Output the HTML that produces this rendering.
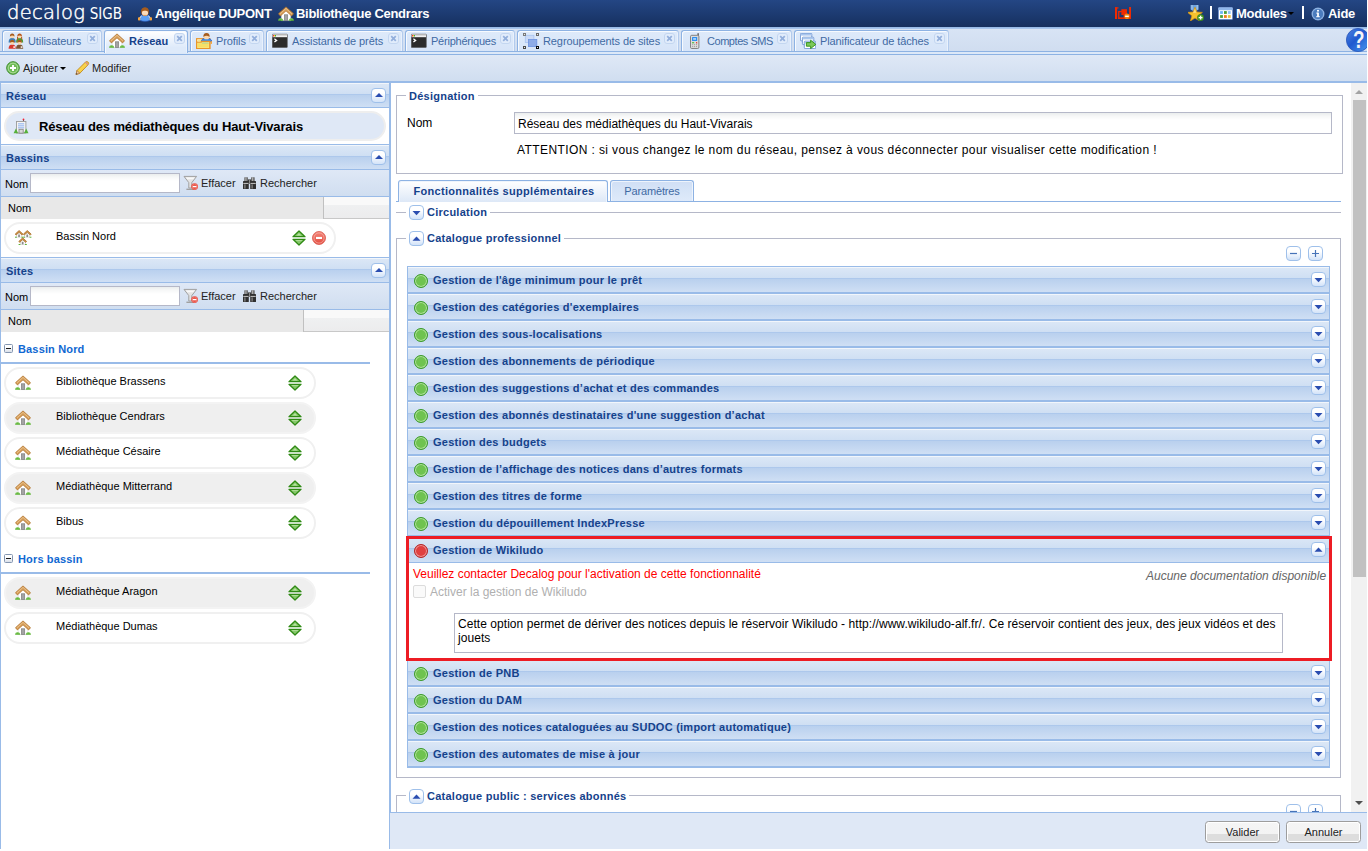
<!DOCTYPE html>
<html lang="fr"><head><meta charset="utf-8"><title>Decalog SIGB</title>
<style>
*{box-sizing:border-box;margin:0;padding:0}
html,body{width:1368px;height:851px;overflow:hidden;background:#fff;font-family:"Liberation Sans",sans-serif;font-size:11px;color:#000}
body{position:relative}
svg{display:block}
#app{position:absolute;left:0;top:0;width:1367px;height:849px;background:#dfe8f6;overflow:hidden}
#hdr{position:absolute;left:0;top:0;width:1367px;height:27px;background:linear-gradient(#244684,#1c3a70 55%,#17305f)}
#hdr .logo{position:absolute;left:7px;top:0;color:#fff;white-space:nowrap}
.l1{font-family:"DejaVu Sans Light","DejaVu Sans","Liberation Sans",sans-serif;font-weight:200;font-size:19.5px;letter-spacing:0.3px;line-height:26px;-webkit-text-stroke:0.45px #fff}
.l2{font-family:"DejaVu Sans Condensed","Liberation Sans",sans-serif;font-size:15px;margin-left:4.6px;line-height:26px}
.hi{position:absolute}
.hu{position:absolute;top:6px;color:#fff;font-weight:bold;font-size:13px;line-height:16px;white-space:nowrap;letter-spacing:-0.3px}
.sep{position:absolute;top:6px;width:2px;height:13px;background:#fff}
.darr{position:absolute;width:0;height:0;border:3px solid transparent;border-top:3.5px solid #000;border-bottom:0}
.darr.k{border-top-color:#000}
#tabs{position:absolute;left:0;top:27px;width:1367px;height:28px;background:linear-gradient(#d8e4f5,#cfdcef);border-top:1px solid #99bbe8}
#tabs:before{content:"";position:absolute;left:0;top:0;width:100%;height:1px;background:#a8c5ec}
.tline{position:absolute;left:0;top:23px;width:1367px;height:4px;background:#dce8f8;border-top:1px solid #8db2e3;border-bottom:1px solid #8db2e3}
.tab{position:absolute;top:2px;height:22px;border:1px solid #8db2e3;border-right-color:#b3cbed;border-bottom:0;border-radius:3px 3px 0 0;background:linear-gradient(#deeafa,#d6e4f8);box-shadow:inset 1px 1px 0 0 #f7fafe,inset -1px 0 0 0 #e9f1fc}
.tab.act{background:linear-gradient(#ffffff,#deeafa 75%);height:23px;z-index:2;border-right-color:#8db2e3}
.tab .ti{position:absolute;left:5px;top:2px}
.tab .tx{position:absolute;left:25px;top:3px;line-height:14px;color:#416aa3;white-space:nowrap;letter-spacing:-0.1px}
.tab.act .tx{color:#15428b;font-weight:bold;letter-spacing:0;left:24px}
.tab.act .ti{left:4px}
.tab.act .cl{right:2px}
.tab .cl{position:absolute;right:3px;top:2px}
.help{position:absolute;left:1346px;top:0}
#tbar{position:absolute;left:0;top:55px;width:1367px;height:28px;background:linear-gradient(#dfe8f6,#d0def0);border-bottom:2px solid #99bbe8}
.bt{position:absolute;top:6px;line-height:14px;color:#222;white-space:nowrap}
#left{position:absolute;left:0;top:83px;width:391px;height:766px;background:linear-gradient(to right,#99bbe8 1px,#fff 1px);border-right:2px solid #99bbe8}
#left>*{margin-top:-83px}
.ph{position:absolute;left:1px;width:388px;height:26px;border-top:1px solid #99bbe8;border-bottom:1px solid #99bbe8;background:linear-gradient(#f2f6fb 0,#f2f6fb 1px,#dbe7f6 1px,#cfdff3 11px,#adc8ec 11px,#adc8ec 12px,#b9d0ee 12px,#cfdff4 100%)}
.ph span{position:absolute;left:5px;top:6px;font-weight:bold;color:#15428b;line-height:14px;letter-spacing:0.2px}
.pt-tg{position:absolute;left:370px;top:5px;width:15px;height:15px;border:1px solid #9fc0ea;border-radius:4px;background:linear-gradient(#fff 30%,#d3e3f8)}
.pt-tg:after{content:"";position:absolute;left:2.5px;top:4px;border:4px solid transparent;border-bottom:4.5px solid #2a4db0;border-top:0}
.bigpill{position:absolute;left:4px;width:382px;height:30px;border-radius:15px;background:#dfe8f6;border:2px solid #eeeeee}
.bigpill span{position:absolute;left:33px;top:6px;font-size:13px;font-weight:bold;line-height:16px;white-space:nowrap;letter-spacing:-0.13px}
.ltb{position:absolute;left:1px;width:388px;height:27px;background:linear-gradient(#dfe8f6,#d0def0);border-bottom:1px solid #99bbe8}
.ltb .lb{position:absolute;left:4px;top:7px;line-height:14px}
.ltb .inp{position:absolute;left:29px;top:3px;width:150px;height:20px;background:linear-gradient(#eaeded 0,#f6f7f7 3px,#fff 7px);border:1px solid #b5b8c8}
.ltb .fi{position:absolute}
.ltb .tt{position:absolute;top:6px;line-height:14px;color:#222}
.gh{position:absolute;left:1px;width:388px;height:22px;background:linear-gradient(#f9f9f9 0,#f9f9f9 8px,#eff0f1 8px,#ececed 100%);border-bottom:1px solid #c8c8c8}
.ghc{height:22px;background:#e8e8e8;border-right:1px solid #c0c0c0;padding:5px 0 0 7px;line-height:13px}
.pill{position:absolute;left:4px;height:32px;border:2px solid #f0f0f0;border-radius:16px;background:#fff}
.pill.alt{background:#efefef;border-color:#f3f3f3}
.pill .ic{position:absolute;left:9px;top:6px}
.pill .pt{position:absolute;left:50px;top:5px;line-height:14px;white-space:nowrap}
.pill .ud{position:absolute;top:6px}
.grp{position:absolute;left:1px;width:369px;height:23px;border-bottom:2px solid #99bbe8;padding:1px 0 0 17px;color:#1068d2;font-weight:bold;line-height:14px;letter-spacing:0.15px}
.gm{position:absolute;left:3px;top:3px;width:9px;height:9px;border:1px solid #8496b0;background:linear-gradient(#fff 30%,#d9dfe9);border-radius:1.5px}
.gm:after{content:"";position:absolute;left:1px;top:2.5px;width:5px;height:1.6px;background:#1a1a1a}
#right{position:absolute;left:391px;top:83px;width:976px;height:766px;background:#fff;overflow:hidden}
#right>*{margin-left:-391px;margin-top:-83px}
.fs{position:absolute;border:1px solid #b5b8c8}
.fs.nb{border-bottom:0}
.lg{position:absolute;background:#fff;padding:0 3px;font-weight:bold;color:#15428b;line-height:15px;white-space:nowrap;letter-spacing:0.25px}
.ftg{display:inline-block;vertical-align:top;margin-right:3px}
.fl{position:absolute;font-size:12px;line-height:15px}
.tin{position:absolute;border:1px solid #b5b8c8;background:linear-gradient(#eaeded 0,#f6f7f7 3px,#fff 7px);font-size:12px;line-height:18px;padding:2px 0 0 3px;white-space:nowrap}
.att{position:absolute;font-size:12px;line-height:15px;white-space:nowrap;letter-spacing:0.4px}
.t2line{position:absolute;left:396px;top:201px;width:945px;height:1px;background:#8db2e3}
.t2{position:absolute;top:180px;height:21px;border:1px solid #8db2e3;border-bottom:0;border-radius:3px 3px 0 0;background:linear-gradient(#d0dff5,#deeafa);box-shadow:inset 1px 1px 0 0 #eef4fc,inset -1px 0 0 0 #eef4fc;text-align:center}
.t2 span{line-height:20px;color:#416aa3;letter-spacing:-0.15px}
.t2.act{height:22px;background:linear-gradient(#fff,#dde8f7)}
.t2.act span{font-weight:bold;color:#15428b;letter-spacing:0.3px;padding-left:2px}
.hl{position:absolute;height:1px;background:#b5b8c8}
.ah{position:absolute;left:407px;width:923px;height:27px;border:1px solid #99bbe8;border-top:0;border-bottom-width:2px;background:linear-gradient(#f2f6fb 0,#f2f6fb 1px,#dbe7f6 1px,#cfdff3 11px,#adc8ec 11px,#adc8ec 12px,#b9d0ee 12px,#cfdff4 100%)}
.ah.first{box-shadow:0 -1px 0 0 #99bbe8}
.ah.open{height:26px;border-bottom-width:1px}
.ah .dot{position:absolute;left:6px;top:7px;width:14px;height:14px;border-radius:50%;background:#6fc350;border:1.3px solid #3c9a2c;box-shadow:inset 0 0 0 1px #b4e39e}
.ah .dot.red{background:#e04040;border-color:#b32626;box-shadow:inset 0 0 0 1px #f09a9a}
.ah .at{position:absolute;left:25px;top:6px;line-height:14px;font-weight:bold;color:#15428b;white-space:nowrap;letter-spacing:0.25px}
.ah .tg{position:absolute;left:903px;top:5px}
.redbox{position:absolute;left:406px;top:536px;width:926px;height:125px;border:3px solid #ed1c24;pointer-events:none;z-index:3}
.wbody{position:absolute;left:408px;top:563px;width:921px;height:96px;background:#fff}
.rt{position:absolute;color:#ff0000;font-size:12px;line-height:14px;white-space:nowrap}
.nodoc{position:absolute;font-style:italic;color:#666;font-size:12px;line-height:14px;white-space:nowrap}
.cb{position:absolute;width:13px;height:13px;border:1px solid #dcdcdc;border-radius:2px;background:#fafafa}
.cbl{position:absolute;color:#b0b0b0;font-size:12px;line-height:15px;white-space:nowrap}
.info{position:absolute;border:1px solid #b5b8c8;font-size:12px;line-height:14px;padding:3px 4px 0 3px;letter-spacing:0.05px}
#sb{position:absolute;left:1351px;top:83px;width:16px;height:729px;background:#f1f1f1}
#sb .su,#sb .sd{position:absolute;left:4px;border:4px solid transparent}
#sb .su{top:7px;border-bottom:4.5px solid #a3a3a3;border-top:0}
#sb .sd{top:718px;border-top:4.5px solid #505050;border-bottom:0}
#sb .th{position:absolute;left:2px;top:17px;width:13px;height:477px;background:#c1c1c1}
#foot{position:absolute;left:390px;top:812px;width:977px;height:37px;background:#dfe8f6;border-top:1px solid #99bbe8}
.btn{position:absolute;top:8px;width:75px;height:22px;border:1px solid #9d9d9d;border-radius:3.5px;background:linear-gradient(#f5f5f5 0,#f3f3f3 12px,#dddddd 12px,#dddddd 100%);text-align:center;line-height:20px;color:#222;box-shadow:inset 0 0 0 1px #fff}

</style></head>
<body>
<div id="app">
<div id="hdr"><span class="logo"><span class="l1">decalog</span><span class="l2">SIGB</span></span><svg class="hi" style="left:137px;top:6px" width="16" height="16" viewBox="0 0 16 16"><path d="M4.3 9.3 H11.7 L14 12.5 Q13.5 15.3 8 15.3 Q2.5 15.3 2 12.5 Z" fill="#5b9ff5" stroke="#2f62c4" stroke-width=".7"/><path d="M4.5 9.6 L2.6 12.3 M11.5 9.6 L13.4 12.3" stroke="#e8f0ff" stroke-width=".9"/><rect x="1" y="11.3" width="2.3" height="3.2" rx=".8" fill="#f6a33b"/><rect x="12.7" y="11.3" width="2.3" height="3.2" rx=".8" fill="#f6a33b"/><ellipse cx="8" cy="5.6" rx="3.9" ry="4.2" fill="#a55c1e"/><ellipse cx="8" cy="6.9" rx="3.1" ry="2.6" fill="#fbdcbc"/><path d="M4.4 5.6 Q8 3.4 11.6 5.6 Q11 1.6 8 1.5 Q5 1.6 4.4 5.6Z" fill="#a55c1e"/><rect x="6.2" y="8.9" width="3.6" height="1.1" fill="#d79a62"/></svg><span class="hu" style="left:155px">Angélique DUPONT</span><svg class="hi" style="left:278px;top:6px" width="16" height="16" viewBox="0 0 16 16"><path d="M8 3.4 L3.3 7.8 V14.6 H12.7 V7.8 Z" fill="#ffffff" stroke="#d4d4d4" stroke-width=".5"/><rect x="6.4" y="8.8" width="3.3" height="5.8" fill="#a3a3a3"/><rect x="6.4" y="8.8" width="3.3" height="5.8" fill="none" stroke="#7d7d7d" stroke-width=".7"/><path d="M0.5 7.7 L8 0.9 L15.5 7.7 L13.6 9.9 L8 4.8 L2.4 9.9 Z" fill="#d9a05a" stroke="#b0712a" stroke-width=".8" stroke-linejoin="round"/><path d="M1.9 7.9 L8 2.4 L14.1 7.9" fill="none" stroke="#eac795" stroke-width=".8"/><path d="M0 14.8 Q0.2 12.1 2.8 12.3 Q5.2 12.5 5.4 14.8 Z" fill="#5cb335"/><path d="M10.6 14.8 Q10.8 12.5 13.2 12.3 Q15.8 12.1 16 14.8 Z" fill="#5cb335"/><path d="M0.6 13.2 Q2.8 12.2 4.8 13.4" fill="none" stroke="#9bd87c" stroke-width=".6"/><path d="M11.2 13.4 Q13.2 12.2 15.4 13.2" fill="none" stroke="#9bd87c" stroke-width=".6"/></svg><span class="hu" style="left:296px">Bibliothèque Cendrars</span><svg class="hi" style="left:1115px;top:7px" width="16.4" height="12" viewBox="0 0 17 12" preserveAspectRatio="none"><rect x="0" y="0.3" width="2.2" height="11.7" fill="#f02a00"/><rect x="0" y="0.3" width="3.6" height="1.2" fill="#f02a00"/><rect x="14.6" y="0" width="2.2" height="12" fill="#f02a00"/><rect x="3.2" y="10.6" width="13" height="1.4" fill="#f02a00"/><rect x="3.9" y="4.6" width="5.6" height="6.6" fill="none" stroke="#f02a00" stroke-width="1.3"/><rect x="6.6" y="2.2" width="5.8" height="5.8" fill="#f02a00"/><circle cx="12.4" cy="9.3" r="2.8" fill="#f0860f"/><rect x="10.5" y="8.6" width="3.8" height="1.4" fill="#fff"/></svg><svg class="hi" style="left:1188px;top:5px" width="16" height="16" viewBox="0 0 16 16"><path d="M2.6 0 H10.6 V4.5 L6.6 7 L2.6 4.5Z" fill="#6fa4dc"/><path d="M4 0 V4.6 M9.2 0 V4.6" stroke="#b7d3f0" stroke-width=".9"/><path d="M7 2.2 L8.9 7 L14.4 7.4 L10.2 10.8 L11.6 16 L7 13.1 L2.4 16 L3.8 10.8 L-0.4 7.4 L5.1 7Z" fill="#f6c22e" stroke="#d9920f" stroke-width=".7" stroke-linejoin="round"/><path d="M7 4 L8.2 7.8 L5 7.8Z" fill="#fbe08a"/><circle cx="12.6" cy="12.6" r="3.2" fill="#4fa22e" stroke="#357a1a" stroke-width=".7"/><path d="M10.7 12.6 H14.5 M12.6 10.7 V14.5" stroke="#fff" stroke-width="1.3"/></svg><span class="sep" style="left:1210px"></span><svg class="hi" style="left:1218px;top:7px" width="15" height="13" viewBox="0 0 15 13"><rect x="0.4" y="0.4" width="14.2" height="12.2" rx="1" fill="#fff" stroke="#5f87c9" stroke-width=".8"/><rect x="0.4" y="0.4" width="14.2" height="2.8" rx="1" fill="#8fb6ea"/><rect x="2.1" y="4.1" width="2.8" height="2.8" fill="#6cb4f8"/><rect x="6" y="4.1" width="2.8" height="2.8" fill="#4d9e3a"/><rect x="9.9" y="4.1" width="2.8" height="2.8" fill="#8cc4fa"/><rect x="2.1" y="8.1" width="2.8" height="2.8" fill="#4d9e3a"/><rect x="6" y="8.1" width="2.8" height="2.8" fill="#f47b20"/><rect x="9.9" y="8.1" width="2.8" height="2.8" fill="#e8c040"/></svg><span class="hu" style="left:1236px">Modules</span><span class="darr" style="left:1287.5px;top:12px"></span><span class="sep" style="left:1302px"></span><svg class="hi" style="left:1311px;top:7px" width="14" height="14" viewBox="0 0 14 14"><circle cx="7" cy="7" r="6.5" fill="#7ea6dc"/><circle cx="7" cy="7" r="5.6" fill="#4a7bbd" stroke="#a9c6ec" stroke-width=".6"/><rect x="6.1" y="5.6" width="1.8" height="4.2" fill="#fff"/><rect x="5.3" y="5.6" width="1.6" height="1" fill="#fff"/><rect x="5.2" y="9.2" width="3.6" height="1" fill="#fff"/><circle cx="7" cy="3.7" r="1.05" fill="#fff"/></svg><span class="hu" style="left:1328px">Aide</span></div>
<div id="tabs"><div class="tab" style="left:2px;width:100px"><svg class="ti" width="16" height="16" viewBox="0 0 16 16"><path d="M0.6000000000000001 9.4 Q0.6000000000000001 5.0 4.2 5.0 Q7.800000000000001 5.0 7.800000000000001 9.4Z" fill="#3f7fb5"/><circle cx="4.2" cy="3.2" r="2.1" fill="#fbd7ae"/><path d="M1.9000000000000001 3.4000000000000004 Q1.9000000000000001 0.40000000000000013 4.2 0.40000000000000013 Q6.500000000000001 0.40000000000000013 6.500000000000001 3.4000000000000004 Q4.2 1.6 1.9000000000000001 3.4000000000000004Z" fill="#a55c1e"/><path d="M8.0 9.4 Q8.0 5.0 11.6 5.0 Q15.2 5.0 15.2 9.4Z" fill="#4d9a36"/><circle cx="11.6" cy="3.2" r="2.1" fill="#fbd7ae"/><path d="M9.3 3.4000000000000004 Q9.3 0.40000000000000013 11.6 0.40000000000000013 Q13.899999999999999 0.40000000000000013 13.899999999999999 3.4000000000000004 Q11.6 1.6 9.3 3.4000000000000004Z" fill="#b3541a"/><path d="M9.1 3.6 Q8.7 6.5 9.6 7.4 L10.2 4.2Z" fill="#b3541a"/><path d="M14.1 3.6 Q14.5 6.5 13.6 7.4 L13 4.2Z" fill="#b3541a"/><path d="M0.6000000000000001 15.8 Q0.6000000000000001 11.4 4.2 11.4 Q7.800000000000001 11.4 7.800000000000001 15.8Z" fill="#d9382c"/><circle cx="4.2" cy="9.6" r="2.1" fill="#fbd7ae"/><path d="M1.9000000000000001 9.799999999999999 Q1.9000000000000001 6.8 4.2 6.8 Q6.500000000000001 6.8 6.500000000000001 9.799999999999999 Q4.2 8.0 1.9000000000000001 9.799999999999999Z" fill="#a55c1e"/><path d="M8.0 15.8 Q8.0 11.4 11.6 11.4 Q15.2 11.4 15.2 15.8Z" fill="#7d5433"/><circle cx="11.6" cy="9.6" r="2.1" fill="#fbd7ae"/><path d="M9.3 9.799999999999999 Q9.3 6.8 11.6 6.8 Q13.899999999999999 6.8 13.899999999999999 9.799999999999999 Q11.6 8.0 9.3 9.799999999999999Z" fill="#a55c1e"/><rect x="5.3" y="13.2" width="1.8" height="1.8" fill="#fff" opacity=".8"/><rect x="12.7" y="13.2" width="1.8" height="1.8" fill="#fff" opacity=".8"/></svg><span class="tx">Utilisateurs</span><svg class="cl" width="11" height="11" viewBox="0 0 11 11"><rect x="0.5" y="0.5" width="10" height="10" rx="2.5" fill="#e1ecfb" stroke="#c3d6f0"/><path d="M3.2 3.2 L7.8 7.8 M7.8 3.2 L3.2 7.8" stroke="#93afdc" stroke-width="1.7"/></svg></div><div class="tab act" style="left:104px;width:84px"><svg class="ti" width="16" height="16" viewBox="0 0 16 16"><path d="M8 3.4 L3.3 7.8 V14.6 H12.7 V7.8 Z" fill="#ffffff" stroke="#d4d4d4" stroke-width=".5"/><rect x="6.4" y="8.8" width="3.3" height="5.8" fill="#a3a3a3"/><rect x="6.4" y="8.8" width="3.3" height="5.8" fill="none" stroke="#7d7d7d" stroke-width=".7"/><path d="M0.5 7.7 L8 0.9 L15.5 7.7 L13.6 9.9 L8 4.8 L2.4 9.9 Z" fill="#d9a05a" stroke="#b0712a" stroke-width=".8" stroke-linejoin="round"/><path d="M1.9 7.9 L8 2.4 L14.1 7.9" fill="none" stroke="#eac795" stroke-width=".8"/><path d="M0 14.8 Q0.2 12.1 2.8 12.3 Q5.2 12.5 5.4 14.8 Z" fill="#5cb335"/><path d="M10.6 14.8 Q10.8 12.5 13.2 12.3 Q15.8 12.1 16 14.8 Z" fill="#5cb335"/><path d="M0.6 13.2 Q2.8 12.2 4.8 13.4" fill="none" stroke="#9bd87c" stroke-width=".6"/><path d="M11.2 13.4 Q13.2 12.2 15.4 13.2" fill="none" stroke="#9bd87c" stroke-width=".6"/></svg><span class="tx">Réseau</span><svg class="cl" width="11" height="11" viewBox="0 0 11 11"><rect x="0.5" y="0.5" width="10" height="10" rx="2.5" fill="#e1ecfb" stroke="#c3d6f0"/><path d="M3.2 3.2 L7.8 7.8 M7.8 3.2 L3.2 7.8" stroke="#93afdc" stroke-width="1.7"/></svg></div><div class="tab" style="left:190px;width:74px"><svg class="ti" width="16" height="16" viewBox="0 0 16 16"><rect x="0.6" y="5.7" width="13.2" height="9.8" fill="#fffbe0" stroke="#e8952a" stroke-width="1.2"/><path d="M5 8.6 Q5.4 5.3 10.5 5.3 Q15.5 5.3 15.9 8.6 Z" fill="#3b8ff0" stroke="#1f4fb8" stroke-width=".6"/><rect x="14.7" y="8.2" width="1.3" height="2.7" fill="#f6a33b"/><circle cx="10.5" cy="3.4" r="2.9" fill="#fbd7ae"/><path d="M7.4 3.9 Q7.1 0.1 10.5 0.1 Q13.9 0.1 13.6 3.9 Q10.5 1.8 7.4 3.9Z" fill="#a55c1e"/><path d="M0.6 9.2 H5.2 V8.4 H13.8 V15.5 H0.6 Z" fill="#f9e884" stroke="#e8952a" stroke-width="1.2"/><rect x="1.8" y="10.2" width="10.8" height="4.2" fill="#f7e066"/><rect x="6" y="9.3" width="6.6" height="1.5" fill="#b9d28c" opacity=".85"/><rect x="1.6" y="6.8" width="3.4" height="1.6" fill="#f7e58a"/></svg><span class="tx">Profils</span><svg class="cl" width="11" height="11" viewBox="0 0 11 11"><rect x="0.5" y="0.5" width="10" height="10" rx="2.5" fill="#e1ecfb" stroke="#c3d6f0"/><path d="M3.2 3.2 L7.8 7.8 M7.8 3.2 L3.2 7.8" stroke="#93afdc" stroke-width="1.7"/></svg></div><div class="tab" style="left:266px;width:137px"><svg class="ti" width="16" height="16" viewBox="0 0 16 16"><rect x="0.3" y="1.2" width="15" height="13.3" rx=".6" fill="#2c2c2c" stroke="#555" stroke-width=".6"/><rect x="0.6" y="1.5" width="14.4" height="2.7" fill="#f2f2f2"/><rect x="0.6" y="1.5" width="14.4" height="1.1" fill="#c9c9c9"/><rect x="1" y="2" width="1" height="1.5" fill="#f04030"/><rect x="2" y="2" width="1" height="1.5" fill="#f0c030"/><rect x="3" y="2" width="1" height="1.5" fill="#40b030"/><path d="M2.4 5.8 L4.6 7.4 L2.4 9" fill="none" stroke="#fff" stroke-width="1.3"/></svg><span class="tx">Assistants de prêts</span><svg class="cl" width="11" height="11" viewBox="0 0 11 11"><rect x="0.5" y="0.5" width="10" height="10" rx="2.5" fill="#e1ecfb" stroke="#c3d6f0"/><path d="M3.2 3.2 L7.8 7.8 M7.8 3.2 L3.2 7.8" stroke="#93afdc" stroke-width="1.7"/></svg></div><div class="tab" style="left:405px;width:110px"><svg class="ti" width="16" height="16" viewBox="0 0 16 16"><rect x="0.3" y="1.2" width="15" height="13.3" rx=".6" fill="#2c2c2c" stroke="#555" stroke-width=".6"/><rect x="0.6" y="1.5" width="14.4" height="2.7" fill="#f2f2f2"/><rect x="0.6" y="1.5" width="14.4" height="1.1" fill="#c9c9c9"/><rect x="1" y="2" width="1" height="1.5" fill="#f04030"/><rect x="2" y="2" width="1" height="1.5" fill="#f0c030"/><rect x="3" y="2" width="1" height="1.5" fill="#40b030"/><path d="M2.4 5.8 L4.6 7.4 L2.4 9" fill="none" stroke="#fff" stroke-width="1.3"/></svg><span class="tx" style="letter-spacing:-0.22px">Périphériques</span><svg class="cl" width="11" height="11" viewBox="0 0 11 11"><rect x="0.5" y="0.5" width="10" height="10" rx="2.5" fill="#e1ecfb" stroke="#c3d6f0"/><path d="M3.2 3.2 L7.8 7.8 M7.8 3.2 L3.2 7.8" stroke="#93afdc" stroke-width="1.7"/></svg></div><div class="tab" style="left:517px;width:162px"><svg class="ti" width="16" height="16" viewBox="0 0 16 16"><rect x="2.3" y="2.3" width="8.6" height="7.2" fill="#cbdaf6" stroke="#a9c3f0" stroke-width=".8"/><rect x="5.4" y="6.4" width="8.4" height="7.2" fill="#8eabe6" stroke="#6d93e0" stroke-width=".8"/><rect x="0" y="0" width="3" height="3" fill="#7a7a7a"/><rect x="13" y="0" width="3" height="3" fill="#6a6a6a"/><rect x="0" y="13" width="3" height="3" fill="#4a4a4a"/><rect x="13" y="13" width="3" height="3" fill="#0c0c0c"/><rect x="1" y="1" width="1" height="1" fill="#e8e8e8"/><rect x="14" y="1" width="1" height="1" fill="#e8e8e8"/><rect x="1" y="14" width="1" height="1" fill="#e8e8e8"/><rect x="14" y="14" width="1" height="1" fill="#e8e8e8"/></svg><span class="tx">Regroupements de sites</span><svg class="cl" width="11" height="11" viewBox="0 0 11 11"><rect x="0.5" y="0.5" width="10" height="10" rx="2.5" fill="#e1ecfb" stroke="#c3d6f0"/><path d="M3.2 3.2 L7.8 7.8 M7.8 3.2 L3.2 7.8" stroke="#93afdc" stroke-width="1.7"/></svg></div><div class="tab" style="left:681px;width:111px"><svg class="ti" width="16" height="16" viewBox="0 0 16 16"><rect x="10.4" y="0.2" width="1.5" height="4" fill="#666"/><rect x="3.5" y="2.3" width="8.4" height="13.2" rx="1.2" fill="#dcdcdc" stroke="#777" stroke-width=".9"/><rect x="5" y="3.9" width="5.2" height="4.2" rx=".5" fill="#2f8ff0"/><rect x="6.2" y="5.2" width="2.8" height="1.5" fill="#bfe0ff"/><rect x="5" y="9.2" width="2.2" height="1.1" fill="#4ab83a"/><rect x="9" y="9.1" width="1.2" height="1.3" fill="#e03030"/><rect x="5.2" y="11.2" width="1" height="1" fill="#999"/><rect x="7.1" y="11.2" width="1" height="1" fill="#999"/><rect x="9" y="11.2" width="1" height="1" fill="#999"/><rect x="5.2" y="13.1" width="1" height="1" fill="#999"/><rect x="7.1" y="13.1" width="1" height="1" fill="#999"/><rect x="9" y="13.1" width="1" height="1" fill="#999"/></svg><span class="tx" style="letter-spacing:-0.45px">Comptes SMS</span><svg class="cl" width="11" height="11" viewBox="0 0 11 11"><rect x="0.5" y="0.5" width="10" height="10" rx="2.5" fill="#e1ecfb" stroke="#c3d6f0"/><path d="M3.2 3.2 L7.8 7.8 M7.8 3.2 L3.2 7.8" stroke="#93afdc" stroke-width="1.7"/></svg></div><div class="tab" style="left:794px;width:155px"><svg class="ti" width="16" height="16" viewBox="0 0 16 16"><rect x="0.4" y="0.4" width="11.4" height="7.4" rx=".8" fill="#fff" stroke="#6b93d0" stroke-width=".9"/><rect x="0.8" y="0.8" width="10.6" height="1.8" fill="#a9c6ee"/><rect x="2.4" y="4.2" width="11.4" height="7.4" rx=".8" fill="#fff" stroke="#6b93d0" stroke-width=".9"/><rect x="2.8" y="4.6000000000000005" width="10.6" height="1.8" fill="#a9c6ee"/><rect x="4.3" y="8.2" width="11.4" height="7.4" rx=".8" fill="#fff" stroke="#6b93d0" stroke-width=".9"/><rect x="4.7" y="8.6" width="10.6" height="1.8" fill="#a9c6ee"/><path d="M6.4 9.6 H10.6 V7.2 L15.8 11.4 L10.6 15.6 V13.2 H6.4Z" fill="#7cc85a" stroke="#2f8f10" stroke-width=".9" stroke-linejoin="round"/></svg><span class="tx">Planificateur de tâches</span><svg class="cl" width="11" height="11" viewBox="0 0 11 11"><rect x="0.5" y="0.5" width="10" height="10" rx="2.5" fill="#e1ecfb" stroke="#c3d6f0"/><path d="M3.2 3.2 L7.8 7.8 M7.8 3.2 L3.2 7.8" stroke="#93afdc" stroke-width="1.7"/></svg></div><div class="tline"></div>
<svg class="help" width="24" height="24" viewBox="0 0 24 24"><defs><linearGradient id="hg" x1="0" y1="0" x2="1" y2="1"><stop offset="0" stop-color="#4f83e2"/><stop offset=".45" stop-color="#2059cf"/><stop offset="1" stop-color="#4a9cf2"/></linearGradient></defs><circle cx="12" cy="12" r="11.6" fill="url(#hg)" stroke="#2a56b8" stroke-width=".8"/><text transform="translate(12.7 20) scale(0.82 1)" x="0" y="0" font-family="Liberation Sans, sans-serif" font-weight="bold" font-size="23" text-anchor="middle" fill="#f4f4f8">?</text></svg>
</div>
<div id="tbar">
<svg style="position:absolute;left:6px;top:6px" width="14" height="14" viewBox="0 0 14 14"><circle cx="7" cy="7" r="6.3" fill="#6dbb55" stroke="#3c8c2c" stroke-width="1"/><circle cx="7" cy="7" r="4.9" fill="none" stroke="#b9e2a6" stroke-width=".9"/><path d="M4 7 H10 M7 4 V10" stroke="#fff" stroke-width="1.9"/></svg>
<span class="bt" style="left:23px">Ajouter</span><span class="darr k" style="left:59.5px;top:12px"></span>
<svg style="position:absolute;left:74px;top:5px" width="16" height="16" viewBox="0 0 16 16"><path d="M2 14.5 L3 10.5 L11.5 2 Q13 1 14.2 2.2 Q15.2 3.4 14 4.8 L5.8 13.3 Z" fill="#f8d24a" stroke="#c18a1c" stroke-width=".9"/><path d="M2 14.5 L3 10.5 L5.8 13.3Z" fill="#f1c9a0" stroke="#a8703a" stroke-width=".7"/><path d="M2 14.5 L2.5 12.8 L3.6 13.9Z" fill="#444"/><path d="M11.5 2 L14 4.8" stroke="#d98a8a" stroke-width="1.2"/></svg>
<span class="bt" style="left:92px">Modifier</span>
</div>
<div id="left"><div class="ph first" style="top:82px"><span>Réseau</span><i class="pt-tg"></i></div>
<div class="bigpill" style="top:111px"><svg style="position:absolute;left:7px;top:5px" width="16" height="16" viewBox="0 0 16 16"><rect x="10.1" y="1" width=".9" height="2.6" fill="#555"/><circle cx="10.5" cy="1.4" r=".9" fill="#f02030"/><rect x="3.5" y="3.5" width="9.4" height="11.5" fill="#f4f4f4" stroke="#9a9a9a" stroke-width=".9"/><rect x="5" y="5.2" width="6.2" height="1.2" fill="#9dbcf2"/><rect x="5" y="7.2" width="6.2" height="1.2" fill="#9dbcf2"/><rect x="5" y="9.2" width="6.2" height="1.2" fill="#9dbcf2"/><rect x="6" y="11.3" width="4.2" height="3.9" fill="#d8d8d8" stroke="#8a8a8a" stroke-width=".9"/><path d="M0.6 15.2 L2.9 10.6 L5.2 15.2Z" fill="#57b03a"/><path d="M10.9 15.2 L13.2 10.6 L15.5 15.2Z" fill="#57b03a"/></svg><span>Réseau des médiathèques du Haut-Vivarais</span></div>
<div class="ph" style="top:144px"><span>Bassins</span><i class="pt-tg"></i></div>
<div class="ltb" style="top:170px"><span class="lb">Nom</span><span class="inp"></span><svg class="fi" style="left:182px;top:5px" width="16" height="16" viewBox="0 0 16 16"><path d="M1 1.4 H13.6 L8.8 7.6 V13 H5.8 V7.6 Z" fill="#e4e4e4" stroke="#a0a0a0" stroke-width="1" stroke-linejoin="round"/><path d="M2.8 2.5 H11.8 L10.4 4.2 H4.2Z" fill="#f8f8f8"/><path d="M3.4 14.3 H11" stroke="#a0a0a0" stroke-width="1.4"/><circle cx="11.6" cy="11.6" r="3.4" fill="#e8483c"/><circle cx="11.6" cy="11.6" r="2.6" fill="none" stroke="#f4a8a0" stroke-width=".5"/><rect x="9.7" y="10.9" width="3.8" height="1.4" fill="#fff"/></svg><span class="tt" style="left:200px">Effacer</span><svg class="fi" style="left:242px;top:7px" width="13" height="12" viewBox="0 0 13 12"><rect x="1.4" y="0.3" width="3.4" height="4" fill="#555"/><rect x="8.2" y="0.3" width="3.4" height="4" fill="#555"/><rect x="2.4" y="0.3" width="1.1" height="3.8" fill="#c4c4c4"/><rect x="9.2" y="0.3" width="1.1" height="3.8" fill="#c4c4c4"/><rect x="4.8" y="2.4" width="3.4" height="4.4" fill="#3c3c3c"/><rect x="6" y="2.4" width="1" height="4.4" fill="#8a8a8a"/><rect x="0" y="4" width="5.8" height="8" rx=".6" fill="#303030"/><rect x="7.2" y="4" width="5.8" height="8" rx=".6" fill="#303030"/><rect x="0.3" y="5.9" width="5.2" height="1.1" fill="#b8b8b8"/><rect x="7.5" y="5.9" width="5.2" height="1.1" fill="#b8b8b8"/><rect x="1.3" y="7.4" width="1.2" height="4.2" fill="#8c8c8c"/><rect x="8.5" y="7.4" width="1.2" height="4.2" fill="#8c8c8c"/></svg><span class="tt" style="left:259px">Rechercher</span></div>
<div class="gh" style="top:197px"><div class="ghc" style="width:323px">Nom</div></div>
<div class="pill" style="top:222px;width:332px"><svg class="ic" width="17" height="16" viewBox="0 0 17 16"><rect x="1.6" y="3.5" width="5" height="3.6" fill="#fbfbfb" stroke="#bdbdbd" stroke-width=".4"/><rect x="3.2" y="4.5" width="1.7" height="2.6" fill="#8a8a8a"/><path d="M0.2 4.1 L4.1 0.5 L8 4.1 L7.1 5.1 L4.1 2.3 L1.1 5.1Z" fill="#cf9249" stroke="#a5691f" stroke-width=".7"/><rect x="0" y="6.7" width="1.8" height="1" fill="#5cb335"/><rect x="6.4" y="6.7" width="1.8" height="1" fill="#5cb335"/><rect x="9.799999999999999" y="3.5" width="5" height="3.6" fill="#fbfbfb" stroke="#bdbdbd" stroke-width=".4"/><rect x="11.399999999999999" y="4.5" width="1.7" height="2.6" fill="#8a8a8a"/><path d="M8.399999999999999 4.1 L12.299999999999999 0.5 L16.2 4.1 L15.299999999999999 5.1 L12.299999999999999 2.3 L9.299999999999999 5.1Z" fill="#cf9249" stroke="#a5691f" stroke-width=".7"/><rect x="8.2" y="6.7" width="1.8" height="1" fill="#5cb335"/><rect x="14.6" y="6.7" width="1.8" height="1" fill="#5cb335"/><rect x="5.2" y="10.8" width="5" height="3.6" fill="#fbfbfb" stroke="#bdbdbd" stroke-width=".4"/><rect x="6.800000000000001" y="11.8" width="1.7" height="2.6" fill="#8a8a8a"/><path d="M3.8000000000000003 11.399999999999999 L7.699999999999999 7.8 L11.6 11.399999999999999 L10.7 12.399999999999999 L7.699999999999999 9.6 L4.7 12.399999999999999Z" fill="#cf9249" stroke="#a5691f" stroke-width=".7"/><rect x="3.6" y="14.0" width="1.8" height="1" fill="#5cb335"/><rect x="10.0" y="14.0" width="1.8" height="1" fill="#5cb335"/></svg><span class="pt">Bassin Nord</span><svg class="ud" style="left:286px" width="14" height="16" viewBox="0 0 14 16"><path d="M7 1 L13 6.7 H1 Z" fill="#86c86a" stroke="#2f8a14" stroke-width="1.3" stroke-linejoin="round"/><path d="M7 15 L13 9.3 H1 Z" fill="#86c86a" stroke="#2f8a14" stroke-width="1.3" stroke-linejoin="round"/><path d="M4.6 5.6 L7 3.3 L9.4 5.6Z" fill="#b9e2a4"/><path d="M3.6 10.2 H10.4 L9.5 11.1 H4.5Z" fill="#b9e2a4"/></svg><svg style="position:absolute;left:306px;top:7px" width="14" height="14" viewBox="0 0 14 14"><defs><linearGradient id="rmg" x1="0" y1="0" x2="0" y2="1"><stop offset="0" stop-color="#f4877a"/><stop offset="1" stop-color="#e2493c"/></linearGradient></defs><circle cx="7" cy="7" r="6.5" fill="url(#rmg)" stroke="#d8564a" stroke-width=".8"/><circle cx="7" cy="7" r="5.1" fill="none" stroke="#f7b5ad" stroke-width=".7"/><rect x="4" y="5.9" width="6" height="2.1" fill="#fff"/></svg></div>
<div class="ph" style="top:257px"><span>Sites</span><i class="pt-tg"></i></div>
<div class="ltb" style="top:283px"><span class="lb">Nom</span><span class="inp"></span><svg class="fi" style="left:182px;top:5px" width="16" height="16" viewBox="0 0 16 16"><path d="M1 1.4 H13.6 L8.8 7.6 V13 H5.8 V7.6 Z" fill="#e4e4e4" stroke="#a0a0a0" stroke-width="1" stroke-linejoin="round"/><path d="M2.8 2.5 H11.8 L10.4 4.2 H4.2Z" fill="#f8f8f8"/><path d="M3.4 14.3 H11" stroke="#a0a0a0" stroke-width="1.4"/><circle cx="11.6" cy="11.6" r="3.4" fill="#e8483c"/><circle cx="11.6" cy="11.6" r="2.6" fill="none" stroke="#f4a8a0" stroke-width=".5"/><rect x="9.7" y="10.9" width="3.8" height="1.4" fill="#fff"/></svg><span class="tt" style="left:200px">Effacer</span><svg class="fi" style="left:242px;top:7px" width="13" height="12" viewBox="0 0 13 12"><rect x="1.4" y="0.3" width="3.4" height="4" fill="#555"/><rect x="8.2" y="0.3" width="3.4" height="4" fill="#555"/><rect x="2.4" y="0.3" width="1.1" height="3.8" fill="#c4c4c4"/><rect x="9.2" y="0.3" width="1.1" height="3.8" fill="#c4c4c4"/><rect x="4.8" y="2.4" width="3.4" height="4.4" fill="#3c3c3c"/><rect x="6" y="2.4" width="1" height="4.4" fill="#8a8a8a"/><rect x="0" y="4" width="5.8" height="8" rx=".6" fill="#303030"/><rect x="7.2" y="4" width="5.8" height="8" rx=".6" fill="#303030"/><rect x="0.3" y="5.9" width="5.2" height="1.1" fill="#b8b8b8"/><rect x="7.5" y="5.9" width="5.2" height="1.1" fill="#b8b8b8"/><rect x="1.3" y="7.4" width="1.2" height="4.2" fill="#8c8c8c"/><rect x="8.5" y="7.4" width="1.2" height="4.2" fill="#8c8c8c"/></svg><span class="tt" style="left:259px">Rechercher</span></div>
<div class="gh" style="top:310px"><div class="ghc" style="width:303px">Nom</div></div>
<div class="grp" style="top:341px"><i class="gm"></i>Bassin Nord</div>
<div class="grp" style="top:551px"><i class="gm"></i>Hors bassin</div>
<div class="pill" style="top:367px;width:312px"><svg class="ic" width="16" height="16" viewBox="0 0 16 16"><path d="M8 3.4 L3.3 7.8 V14.6 H12.7 V7.8 Z" fill="#ffffff" stroke="#d4d4d4" stroke-width=".5"/><rect x="6.4" y="8.8" width="3.3" height="5.8" fill="#a3a3a3"/><rect x="6.4" y="8.8" width="3.3" height="5.8" fill="none" stroke="#7d7d7d" stroke-width=".7"/><path d="M0.5 7.7 L8 0.9 L15.5 7.7 L13.6 9.9 L8 4.8 L2.4 9.9 Z" fill="#d9a05a" stroke="#b0712a" stroke-width=".8" stroke-linejoin="round"/><path d="M1.9 7.9 L8 2.4 L14.1 7.9" fill="none" stroke="#eac795" stroke-width=".8"/><path d="M0 14.8 Q0.2 12.1 2.8 12.3 Q5.2 12.5 5.4 14.8 Z" fill="#5cb335"/><path d="M10.6 14.8 Q10.8 12.5 13.2 12.3 Q15.8 12.1 16 14.8 Z" fill="#5cb335"/><path d="M0.6 13.2 Q2.8 12.2 4.8 13.4" fill="none" stroke="#9bd87c" stroke-width=".6"/><path d="M11.2 13.4 Q13.2 12.2 15.4 13.2" fill="none" stroke="#9bd87c" stroke-width=".6"/></svg><span class="pt">Bibliothèque Brassens</span><svg class="ud" style="left:282px" width="14" height="16" viewBox="0 0 14 16"><path d="M7 1 L13 6.7 H1 Z" fill="#86c86a" stroke="#2f8a14" stroke-width="1.3" stroke-linejoin="round"/><path d="M7 15 L13 9.3 H1 Z" fill="#86c86a" stroke="#2f8a14" stroke-width="1.3" stroke-linejoin="round"/><path d="M4.6 5.6 L7 3.3 L9.4 5.6Z" fill="#b9e2a4"/><path d="M3.6 10.2 H10.4 L9.5 11.1 H4.5Z" fill="#b9e2a4"/></svg></div>
<div class="pill alt" style="top:402px;width:312px"><svg class="ic" width="16" height="16" viewBox="0 0 16 16"><path d="M8 3.4 L3.3 7.8 V14.6 H12.7 V7.8 Z" fill="#ffffff" stroke="#d4d4d4" stroke-width=".5"/><rect x="6.4" y="8.8" width="3.3" height="5.8" fill="#a3a3a3"/><rect x="6.4" y="8.8" width="3.3" height="5.8" fill="none" stroke="#7d7d7d" stroke-width=".7"/><path d="M0.5 7.7 L8 0.9 L15.5 7.7 L13.6 9.9 L8 4.8 L2.4 9.9 Z" fill="#d9a05a" stroke="#b0712a" stroke-width=".8" stroke-linejoin="round"/><path d="M1.9 7.9 L8 2.4 L14.1 7.9" fill="none" stroke="#eac795" stroke-width=".8"/><path d="M0 14.8 Q0.2 12.1 2.8 12.3 Q5.2 12.5 5.4 14.8 Z" fill="#5cb335"/><path d="M10.6 14.8 Q10.8 12.5 13.2 12.3 Q15.8 12.1 16 14.8 Z" fill="#5cb335"/><path d="M0.6 13.2 Q2.8 12.2 4.8 13.4" fill="none" stroke="#9bd87c" stroke-width=".6"/><path d="M11.2 13.4 Q13.2 12.2 15.4 13.2" fill="none" stroke="#9bd87c" stroke-width=".6"/></svg><span class="pt">Bibliothèque Cendrars</span><svg class="ud" style="left:282px" width="14" height="16" viewBox="0 0 14 16"><path d="M7 1 L13 6.7 H1 Z" fill="#86c86a" stroke="#2f8a14" stroke-width="1.3" stroke-linejoin="round"/><path d="M7 15 L13 9.3 H1 Z" fill="#86c86a" stroke="#2f8a14" stroke-width="1.3" stroke-linejoin="round"/><path d="M4.6 5.6 L7 3.3 L9.4 5.6Z" fill="#b9e2a4"/><path d="M3.6 10.2 H10.4 L9.5 11.1 H4.5Z" fill="#b9e2a4"/></svg></div>
<div class="pill" style="top:437px;width:312px"><svg class="ic" width="16" height="16" viewBox="0 0 16 16"><path d="M8 3.4 L3.3 7.8 V14.6 H12.7 V7.8 Z" fill="#ffffff" stroke="#d4d4d4" stroke-width=".5"/><rect x="6.4" y="8.8" width="3.3" height="5.8" fill="#a3a3a3"/><rect x="6.4" y="8.8" width="3.3" height="5.8" fill="none" stroke="#7d7d7d" stroke-width=".7"/><path d="M0.5 7.7 L8 0.9 L15.5 7.7 L13.6 9.9 L8 4.8 L2.4 9.9 Z" fill="#d9a05a" stroke="#b0712a" stroke-width=".8" stroke-linejoin="round"/><path d="M1.9 7.9 L8 2.4 L14.1 7.9" fill="none" stroke="#eac795" stroke-width=".8"/><path d="M0 14.8 Q0.2 12.1 2.8 12.3 Q5.2 12.5 5.4 14.8 Z" fill="#5cb335"/><path d="M10.6 14.8 Q10.8 12.5 13.2 12.3 Q15.8 12.1 16 14.8 Z" fill="#5cb335"/><path d="M0.6 13.2 Q2.8 12.2 4.8 13.4" fill="none" stroke="#9bd87c" stroke-width=".6"/><path d="M11.2 13.4 Q13.2 12.2 15.4 13.2" fill="none" stroke="#9bd87c" stroke-width=".6"/></svg><span class="pt">Médiathèque Césaire</span><svg class="ud" style="left:282px" width="14" height="16" viewBox="0 0 14 16"><path d="M7 1 L13 6.7 H1 Z" fill="#86c86a" stroke="#2f8a14" stroke-width="1.3" stroke-linejoin="round"/><path d="M7 15 L13 9.3 H1 Z" fill="#86c86a" stroke="#2f8a14" stroke-width="1.3" stroke-linejoin="round"/><path d="M4.6 5.6 L7 3.3 L9.4 5.6Z" fill="#b9e2a4"/><path d="M3.6 10.2 H10.4 L9.5 11.1 H4.5Z" fill="#b9e2a4"/></svg></div>
<div class="pill alt" style="top:472px;width:312px"><svg class="ic" width="16" height="16" viewBox="0 0 16 16"><path d="M8 3.4 L3.3 7.8 V14.6 H12.7 V7.8 Z" fill="#ffffff" stroke="#d4d4d4" stroke-width=".5"/><rect x="6.4" y="8.8" width="3.3" height="5.8" fill="#a3a3a3"/><rect x="6.4" y="8.8" width="3.3" height="5.8" fill="none" stroke="#7d7d7d" stroke-width=".7"/><path d="M0.5 7.7 L8 0.9 L15.5 7.7 L13.6 9.9 L8 4.8 L2.4 9.9 Z" fill="#d9a05a" stroke="#b0712a" stroke-width=".8" stroke-linejoin="round"/><path d="M1.9 7.9 L8 2.4 L14.1 7.9" fill="none" stroke="#eac795" stroke-width=".8"/><path d="M0 14.8 Q0.2 12.1 2.8 12.3 Q5.2 12.5 5.4 14.8 Z" fill="#5cb335"/><path d="M10.6 14.8 Q10.8 12.5 13.2 12.3 Q15.8 12.1 16 14.8 Z" fill="#5cb335"/><path d="M0.6 13.2 Q2.8 12.2 4.8 13.4" fill="none" stroke="#9bd87c" stroke-width=".6"/><path d="M11.2 13.4 Q13.2 12.2 15.4 13.2" fill="none" stroke="#9bd87c" stroke-width=".6"/></svg><span class="pt">Médiathèque Mitterrand</span><svg class="ud" style="left:282px" width="14" height="16" viewBox="0 0 14 16"><path d="M7 1 L13 6.7 H1 Z" fill="#86c86a" stroke="#2f8a14" stroke-width="1.3" stroke-linejoin="round"/><path d="M7 15 L13 9.3 H1 Z" fill="#86c86a" stroke="#2f8a14" stroke-width="1.3" stroke-linejoin="round"/><path d="M4.6 5.6 L7 3.3 L9.4 5.6Z" fill="#b9e2a4"/><path d="M3.6 10.2 H10.4 L9.5 11.1 H4.5Z" fill="#b9e2a4"/></svg></div>
<div class="pill" style="top:507px;width:312px"><svg class="ic" width="16" height="16" viewBox="0 0 16 16"><path d="M8 3.4 L3.3 7.8 V14.6 H12.7 V7.8 Z" fill="#ffffff" stroke="#d4d4d4" stroke-width=".5"/><rect x="6.4" y="8.8" width="3.3" height="5.8" fill="#a3a3a3"/><rect x="6.4" y="8.8" width="3.3" height="5.8" fill="none" stroke="#7d7d7d" stroke-width=".7"/><path d="M0.5 7.7 L8 0.9 L15.5 7.7 L13.6 9.9 L8 4.8 L2.4 9.9 Z" fill="#d9a05a" stroke="#b0712a" stroke-width=".8" stroke-linejoin="round"/><path d="M1.9 7.9 L8 2.4 L14.1 7.9" fill="none" stroke="#eac795" stroke-width=".8"/><path d="M0 14.8 Q0.2 12.1 2.8 12.3 Q5.2 12.5 5.4 14.8 Z" fill="#5cb335"/><path d="M10.6 14.8 Q10.8 12.5 13.2 12.3 Q15.8 12.1 16 14.8 Z" fill="#5cb335"/><path d="M0.6 13.2 Q2.8 12.2 4.8 13.4" fill="none" stroke="#9bd87c" stroke-width=".6"/><path d="M11.2 13.4 Q13.2 12.2 15.4 13.2" fill="none" stroke="#9bd87c" stroke-width=".6"/></svg><span class="pt">Bibus</span><svg class="ud" style="left:282px" width="14" height="16" viewBox="0 0 14 16"><path d="M7 1 L13 6.7 H1 Z" fill="#86c86a" stroke="#2f8a14" stroke-width="1.3" stroke-linejoin="round"/><path d="M7 15 L13 9.3 H1 Z" fill="#86c86a" stroke="#2f8a14" stroke-width="1.3" stroke-linejoin="round"/><path d="M4.6 5.6 L7 3.3 L9.4 5.6Z" fill="#b9e2a4"/><path d="M3.6 10.2 H10.4 L9.5 11.1 H4.5Z" fill="#b9e2a4"/></svg></div>
<div class="pill alt" style="top:577px;width:312px"><svg class="ic" width="16" height="16" viewBox="0 0 16 16"><path d="M8 3.4 L3.3 7.8 V14.6 H12.7 V7.8 Z" fill="#ffffff" stroke="#d4d4d4" stroke-width=".5"/><rect x="6.4" y="8.8" width="3.3" height="5.8" fill="#a3a3a3"/><rect x="6.4" y="8.8" width="3.3" height="5.8" fill="none" stroke="#7d7d7d" stroke-width=".7"/><path d="M0.5 7.7 L8 0.9 L15.5 7.7 L13.6 9.9 L8 4.8 L2.4 9.9 Z" fill="#d9a05a" stroke="#b0712a" stroke-width=".8" stroke-linejoin="round"/><path d="M1.9 7.9 L8 2.4 L14.1 7.9" fill="none" stroke="#eac795" stroke-width=".8"/><path d="M0 14.8 Q0.2 12.1 2.8 12.3 Q5.2 12.5 5.4 14.8 Z" fill="#5cb335"/><path d="M10.6 14.8 Q10.8 12.5 13.2 12.3 Q15.8 12.1 16 14.8 Z" fill="#5cb335"/><path d="M0.6 13.2 Q2.8 12.2 4.8 13.4" fill="none" stroke="#9bd87c" stroke-width=".6"/><path d="M11.2 13.4 Q13.2 12.2 15.4 13.2" fill="none" stroke="#9bd87c" stroke-width=".6"/></svg><span class="pt">Médiathèque Aragon</span><svg class="ud" style="left:282px" width="14" height="16" viewBox="0 0 14 16"><path d="M7 1 L13 6.7 H1 Z" fill="#86c86a" stroke="#2f8a14" stroke-width="1.3" stroke-linejoin="round"/><path d="M7 15 L13 9.3 H1 Z" fill="#86c86a" stroke="#2f8a14" stroke-width="1.3" stroke-linejoin="round"/><path d="M4.6 5.6 L7 3.3 L9.4 5.6Z" fill="#b9e2a4"/><path d="M3.6 10.2 H10.4 L9.5 11.1 H4.5Z" fill="#b9e2a4"/></svg></div>
<div class="pill" style="top:612px;width:312px"><svg class="ic" width="16" height="16" viewBox="0 0 16 16"><path d="M8 3.4 L3.3 7.8 V14.6 H12.7 V7.8 Z" fill="#ffffff" stroke="#d4d4d4" stroke-width=".5"/><rect x="6.4" y="8.8" width="3.3" height="5.8" fill="#a3a3a3"/><rect x="6.4" y="8.8" width="3.3" height="5.8" fill="none" stroke="#7d7d7d" stroke-width=".7"/><path d="M0.5 7.7 L8 0.9 L15.5 7.7 L13.6 9.9 L8 4.8 L2.4 9.9 Z" fill="#d9a05a" stroke="#b0712a" stroke-width=".8" stroke-linejoin="round"/><path d="M1.9 7.9 L8 2.4 L14.1 7.9" fill="none" stroke="#eac795" stroke-width=".8"/><path d="M0 14.8 Q0.2 12.1 2.8 12.3 Q5.2 12.5 5.4 14.8 Z" fill="#5cb335"/><path d="M10.6 14.8 Q10.8 12.5 13.2 12.3 Q15.8 12.1 16 14.8 Z" fill="#5cb335"/><path d="M0.6 13.2 Q2.8 12.2 4.8 13.4" fill="none" stroke="#9bd87c" stroke-width=".6"/><path d="M11.2 13.4 Q13.2 12.2 15.4 13.2" fill="none" stroke="#9bd87c" stroke-width=".6"/></svg><span class="pt">Médiathèque Dumas</span><svg class="ud" style="left:282px" width="14" height="16" viewBox="0 0 14 16"><path d="M7 1 L13 6.7 H1 Z" fill="#86c86a" stroke="#2f8a14" stroke-width="1.3" stroke-linejoin="round"/><path d="M7 15 L13 9.3 H1 Z" fill="#86c86a" stroke="#2f8a14" stroke-width="1.3" stroke-linejoin="round"/><path d="M4.6 5.6 L7 3.3 L9.4 5.6Z" fill="#b9e2a4"/><path d="M3.6 10.2 H10.4 L9.5 11.1 H4.5Z" fill="#b9e2a4"/></svg></div></div>
<div id="right"><svg width="0" height="0" style="position:absolute"><defs><linearGradient id="tgg" x1="0" y1="0" x2="0" y2="1"><stop offset=".35" stop-color="#fff"/><stop offset="1" stop-color="#d0e1f8"/></linearGradient></defs></svg>
<div class="fs" style="left:396px;top:95px;width:947px;height:79px"></div>
<span class="lg" style="left:406px;top:89px">Désignation</span>
<span class="fl" style="left:407px;top:116px">Nom</span>
<div class="tin" style="left:514px;top:112px;width:818px;height:22px">Réseau des médiathèques du Haut-Vivarais</div>
<span class="att" style="left:517px;top:143px">ATTENTION : si vous changez le nom du réseau, pensez à vous déconnecter pour visualiser cette modification !</span>
<div class="t2line"></div>
<div class="t2 act" style="left:398px;width:210px"><span>Fonctionnalités supplémentaires</span></div>
<div class="t2" style="left:610px;width:84px"><span>Paramètres</span></div>
<div class="hl" style="left:396px;top:212px;width:945px"></div>
<span class="lg" style="left:406px;top:205px"><svg class="ftg" width="15" height="15" viewBox="0 0 15 15"><rect x="0.5" y="0.5" width="14" height="14" rx="3.5" fill="url(#tgg)" stroke="#9fc0ea"/><path d="M3.5 6 L11.5 6 L7.5 10.2 Z" fill="#2a4db0"/></svg>Circulation</span>
<div class="fs" style="left:396px;top:238px;width:945px;height:540px"></div>
<span class="lg" style="left:406px;top:231px"><svg class="ftg" width="15" height="15" viewBox="0 0 15 15"><rect x="0.5" y="0.5" width="14" height="14" rx="3.5" fill="url(#tgg)" stroke="#9fc0ea"/><path d="M3.5 9.7 L7.5 5.5 L11.5 9.7 Z" fill="#2a4db0"/></svg>Catalogue professionnel</span>
<svg style="position:absolute;left:1286px;top:246px" width="15" height="15" viewBox="0 0 15 15"><rect x="0.5" y="0.5" width="14" height="14" rx="3.5" fill="url(#tgg)" stroke="#9fc0ea"/><path d="M4 7.5 H11" stroke="#4673b8" stroke-width="1.2"/></svg>
<svg style="position:absolute;left:1308px;top:246px" width="15" height="15" viewBox="0 0 15 15"><rect x="0.5" y="0.5" width="14" height="14" rx="3.5" fill="url(#tgg)" stroke="#9fc0ea"/><path d="M4 7.5 H11 M7.5 4 V11" stroke="#4673b8" stroke-width="1.2"/></svg>
<div class="ah first" style="top:267px"><span class="dot"></span><span class="at">Gestion de l&#x27;âge minimum pour le prêt</span><svg class="tg" width="15" height="15" viewBox="0 0 15 15"><rect x="0.5" y="0.5" width="14" height="14" rx="3.5" fill="url(#tgg)" stroke="#9fc0ea"/><path d="M3.5 6 L11.5 6 L7.5 10.2 Z" fill="#2a4db0"/></svg></div>
<div class="ah" style="top:294px"><span class="dot"></span><span class="at">Gestion des catégories d&#x27;exemplaires</span><svg class="tg" width="15" height="15" viewBox="0 0 15 15"><rect x="0.5" y="0.5" width="14" height="14" rx="3.5" fill="url(#tgg)" stroke="#9fc0ea"/><path d="M3.5 6 L11.5 6 L7.5 10.2 Z" fill="#2a4db0"/></svg></div>
<div class="ah" style="top:321px"><span class="dot"></span><span class="at">Gestion des sous-localisations</span><svg class="tg" width="15" height="15" viewBox="0 0 15 15"><rect x="0.5" y="0.5" width="14" height="14" rx="3.5" fill="url(#tgg)" stroke="#9fc0ea"/><path d="M3.5 6 L11.5 6 L7.5 10.2 Z" fill="#2a4db0"/></svg></div>
<div class="ah" style="top:348px"><span class="dot"></span><span class="at">Gestion des abonnements de périodique</span><svg class="tg" width="15" height="15" viewBox="0 0 15 15"><rect x="0.5" y="0.5" width="14" height="14" rx="3.5" fill="url(#tgg)" stroke="#9fc0ea"/><path d="M3.5 6 L11.5 6 L7.5 10.2 Z" fill="#2a4db0"/></svg></div>
<div class="ah" style="top:375px"><span class="dot"></span><span class="at">Gestion des suggestions d’achat et des commandes</span><svg class="tg" width="15" height="15" viewBox="0 0 15 15"><rect x="0.5" y="0.5" width="14" height="14" rx="3.5" fill="url(#tgg)" stroke="#9fc0ea"/><path d="M3.5 6 L11.5 6 L7.5 10.2 Z" fill="#2a4db0"/></svg></div>
<div class="ah" style="top:402px"><span class="dot"></span><span class="at">Gestion des abonnés destinataires d&#x27;une suggestion d’achat</span><svg class="tg" width="15" height="15" viewBox="0 0 15 15"><rect x="0.5" y="0.5" width="14" height="14" rx="3.5" fill="url(#tgg)" stroke="#9fc0ea"/><path d="M3.5 6 L11.5 6 L7.5 10.2 Z" fill="#2a4db0"/></svg></div>
<div class="ah" style="top:429px"><span class="dot"></span><span class="at">Gestion des budgets</span><svg class="tg" width="15" height="15" viewBox="0 0 15 15"><rect x="0.5" y="0.5" width="14" height="14" rx="3.5" fill="url(#tgg)" stroke="#9fc0ea"/><path d="M3.5 6 L11.5 6 L7.5 10.2 Z" fill="#2a4db0"/></svg></div>
<div class="ah" style="top:456px"><span class="dot"></span><span class="at">Gestion de l’affichage des notices dans d’autres formats</span><svg class="tg" width="15" height="15" viewBox="0 0 15 15"><rect x="0.5" y="0.5" width="14" height="14" rx="3.5" fill="url(#tgg)" stroke="#9fc0ea"/><path d="M3.5 6 L11.5 6 L7.5 10.2 Z" fill="#2a4db0"/></svg></div>
<div class="ah" style="top:483px"><span class="dot"></span><span class="at">Gestion des titres de forme</span><svg class="tg" width="15" height="15" viewBox="0 0 15 15"><rect x="0.5" y="0.5" width="14" height="14" rx="3.5" fill="url(#tgg)" stroke="#9fc0ea"/><path d="M3.5 6 L11.5 6 L7.5 10.2 Z" fill="#2a4db0"/></svg></div>
<div class="ah" style="top:510px"><span class="dot"></span><span class="at">Gestion du dépouillement IndexPresse</span><svg class="tg" width="15" height="15" viewBox="0 0 15 15"><rect x="0.5" y="0.5" width="14" height="14" rx="3.5" fill="url(#tgg)" stroke="#9fc0ea"/><path d="M3.5 6 L11.5 6 L7.5 10.2 Z" fill="#2a4db0"/></svg></div>
<div class="ah open" style="top:537px"><span class="dot red"></span><span class="at">Gestion de Wikiludo</span><svg class="tg" width="15" height="15" viewBox="0 0 15 15"><rect x="0.5" y="0.5" width="14" height="14" rx="3.5" fill="url(#tgg)" stroke="#9fc0ea"/><path d="M3.5 9.7 L7.5 5.5 L11.5 9.7 Z" fill="#2a4db0"/></svg></div>
<div class="wbody"></div>
<span class="rt" style="left:413px;top:567px">Veuillez contacter Decalog pour l'activation de cette fonctionnalité</span>
<span class="nodoc" style="left:1146px;top:569px">Aucune documentation disponible</span>
<span class="cb" style="left:413px;top:585px"></span><span class="cbl" style="left:430px;top:585px">Activer la gestion de Wikiludo</span>
<div class="info" style="left:454px;top:613px;width:829px;height:40px">Cette option permet de dériver des notices depuis le réservoir Wikiludo - http://www.wikiludo-alf.fr/. Ce réservoir contient des jeux, des jeux vidéos et des jouets</div>
<div class="ah" style="top:660px"><span class="dot"></span><span class="at">Gestion de PNB</span><svg class="tg" width="15" height="15" viewBox="0 0 15 15"><rect x="0.5" y="0.5" width="14" height="14" rx="3.5" fill="url(#tgg)" stroke="#9fc0ea"/><path d="M3.5 6 L11.5 6 L7.5 10.2 Z" fill="#2a4db0"/></svg></div>
<div class="ah" style="top:687px"><span class="dot"></span><span class="at">Gestion du DAM</span><svg class="tg" width="15" height="15" viewBox="0 0 15 15"><rect x="0.5" y="0.5" width="14" height="14" rx="3.5" fill="url(#tgg)" stroke="#9fc0ea"/><path d="M3.5 6 L11.5 6 L7.5 10.2 Z" fill="#2a4db0"/></svg></div>
<div class="ah" style="top:714px"><span class="dot"></span><span class="at">Gestion des notices cataloguées au SUDOC (import automatique)</span><svg class="tg" width="15" height="15" viewBox="0 0 15 15"><rect x="0.5" y="0.5" width="14" height="14" rx="3.5" fill="url(#tgg)" stroke="#9fc0ea"/><path d="M3.5 6 L11.5 6 L7.5 10.2 Z" fill="#2a4db0"/></svg></div>
<div class="ah" style="top:741px"><span class="dot"></span><span class="at">Gestion des automates de mise à jour</span><svg class="tg" width="15" height="15" viewBox="0 0 15 15"><rect x="0.5" y="0.5" width="14" height="14" rx="3.5" fill="url(#tgg)" stroke="#9fc0ea"/><path d="M3.5 6 L11.5 6 L7.5 10.2 Z" fill="#2a4db0"/></svg></div>
<div class="redbox"></div>
<div class="fs nb" style="left:396px;top:795px;width:945px;height:30px"></div>
<span class="lg" style="left:406px;top:789px"><svg class="ftg" width="15" height="15" viewBox="0 0 15 15"><rect x="0.5" y="0.5" width="14" height="14" rx="3.5" fill="url(#tgg)" stroke="#9fc0ea"/><path d="M3.5 9.7 L7.5 5.5 L11.5 9.7 Z" fill="#2a4db0"/></svg>Catalogue public : services abonnés</span>
<svg style="position:absolute;left:1286px;top:804px" width="15" height="15" viewBox="0 0 15 15"><rect x="0.5" y="0.5" width="14" height="14" rx="3.5" fill="url(#tgg)" stroke="#9fc0ea"/><path d="M4 7.5 H11" stroke="#4673b8" stroke-width="1.2"/></svg>
<svg style="position:absolute;left:1308px;top:804px" width="15" height="15" viewBox="0 0 15 15"><rect x="0.5" y="0.5" width="14" height="14" rx="3.5" fill="url(#tgg)" stroke="#9fc0ea"/><path d="M4 7.5 H11 M7.5 4 V11" stroke="#4673b8" stroke-width="1.2"/></svg>
<div id="sb"><i class="su"></i><i class="th"></i><i class="sd"></i></div></div>
<div id="foot"><span class="btn" style="left:815px">Valider</span><span class="btn" style="left:896px">Annuler</span></div>
</div>
</body></html>
